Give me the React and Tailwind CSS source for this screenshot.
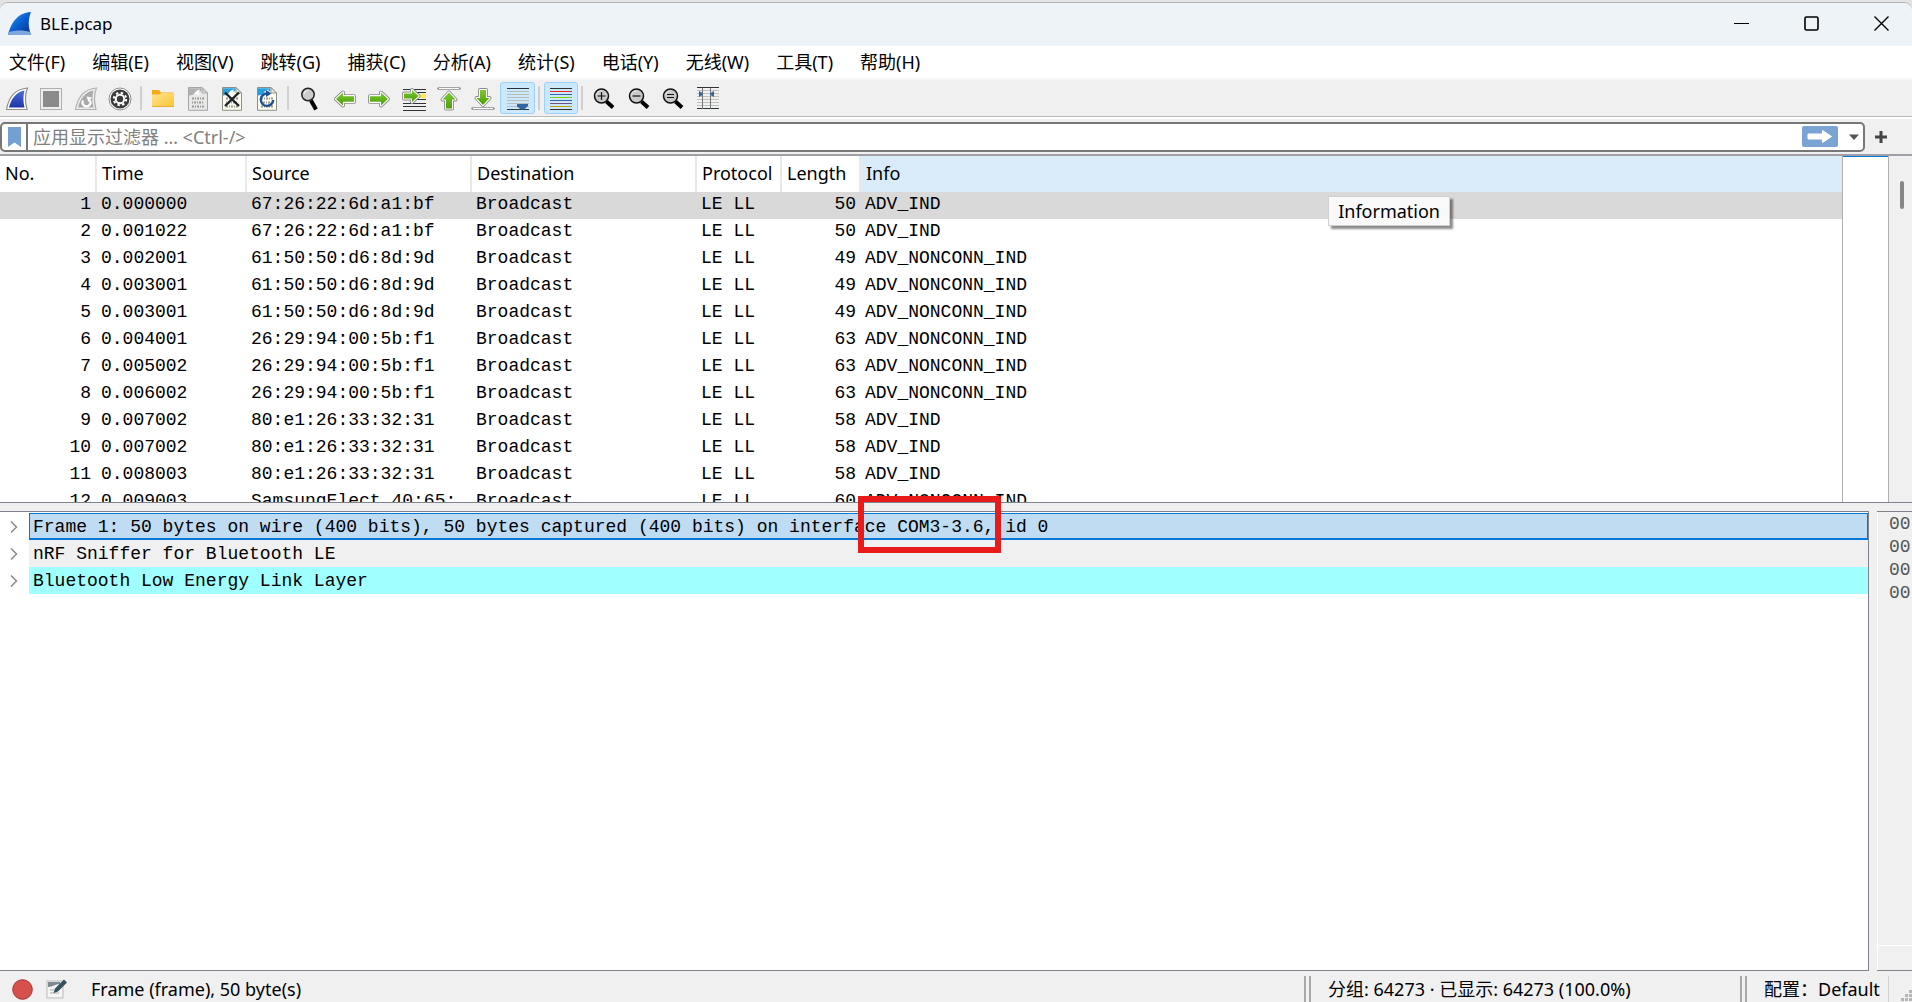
import { useState } from "react";
import clsx from "clsx";

const UI_FONT = "font-['Noto_Sans','Noto_Sans_CJK_SC',sans-serif]";
const MONO_FONT = "font-['Liberation_Mono','Noto_Sans_CJK_SC',monospace]";

const MENUS = [
  "文件(F)", "编辑(E)", "视图(V)", "跳转(G)", "捕获(C)", "分析(A)",
  "统计(S)", "电话(Y)", "无线(W)", "工具(T)", "帮助(H)",
];

const COLUMNS = [
  { label: "No.", width: "w-[97px]" },
  { label: "Time", width: "w-[150px]" },
  { label: "Source", width: "w-[225px]" },
  { label: "Destination", width: "w-[225px]" },
  { label: "Protocol", width: "w-[85px]" },
  { label: "Length", width: "w-[79px]" },
  { label: "Info", width: "" },
];

const PACKETS = [
  ["0.000000", "67:26:22:6d:a1:bf", 50, "ADV_IND"],
  ["0.001022", "67:26:22:6d:a1:bf", 50, "ADV_IND"],
  ["0.002001", "61:50:50:d6:8d:9d", 49, "ADV_NONCONN_IND"],
  ["0.003001", "61:50:50:d6:8d:9d", 49, "ADV_NONCONN_IND"],
  ["0.003001", "61:50:50:d6:8d:9d", 49, "ADV_NONCONN_IND"],
  ["0.004001", "26:29:94:00:5b:f1", 63, "ADV_NONCONN_IND"],
  ["0.005002", "26:29:94:00:5b:f1", 63, "ADV_NONCONN_IND"],
  ["0.006002", "26:29:94:00:5b:f1", 63, "ADV_NONCONN_IND"],
  ["0.007002", "80:e1:26:33:32:31", 58, "ADV_IND"],
  ["0.007002", "80:e1:26:33:32:31", 58, "ADV_IND"],
  ["0.008003", "80:e1:26:33:32:31", 58, "ADV_IND"],
  ["0.009003", "SamsungElect_40:65:", 60, "ADV_NONCONN_IND"],
];

export default function App() {
  return (
    <div className={`flex h-screen flex-col overflow-hidden bg-[#e4e4e4] pt-[2px] text-[18px] text-black ${UI_FONT}`}>
      <div className="flex min-h-0 flex-1 flex-col rounded-t-lg border-t border-[#b2b2b2] bg-[#f0f0f0]">
        <TitleBar />
        <MenuBar />
        <Toolbar />
        <FilterBar />
        <PacketPane />
        <div className="h-2 shrink-0" />
        <div className="flex min-h-0 flex-1">
          <DetailsPane />
          <BytesPane />
        </div>
        <StatusBar />
      </div>
    </div>
  );
}

function TitleBar() {
  return (
    <header className="flex h-[43px] shrink-0 items-center rounded-t-lg bg-[#eef3f8] pb-[2px] pl-2">
      <svg className="h-6 w-6" viewBox="0 0 24 24">
        <defs>
          <linearGradient id="logo" x1="0" y1="0" x2="1" y2="1">
            <stop offset="0" stopColor="#2a9df4" />
            <stop offset="0.5" stopColor="#0a5fd0" />
            <stop offset="1" stopColor="#0a2f86" />
          </linearGradient>
        </defs>
        <path d="M0 23C3 11 9 1 23 0C20 7 20 15 23 23Z" fill="url(#logo)" />
        <path d="M1 20C8 18 16 18 22 20L23 23H0Z" fill="#7fa6dd" />
      </svg>
      <h1 className="ml-2 text-[17px]">BLE.pcap</h1>
      <div className="ml-auto flex h-full gap-2">
        <WindowButton label="最小化"><path d="M0 7.5H15" /></WindowButton>
        <WindowButton label="最大化"><rect x="1" y="1" width="13" height="13" rx="1.5" strokeWidth="1.6" /></WindowButton>
        <WindowButton label="关闭"><path d="M0.5 0.5L14.5 14.5M14.5 0.5L0.5 14.5" strokeWidth="1.4" /></WindowButton>
      </div>
    </header>
  );
}

function WindowButton({ label, children }) {
  return (
    <button aria-label={label} className="flex w-[62px] items-center justify-center">
      <svg className="h-[15px] w-[15px]" viewBox="0 0 15 15" fill="none" stroke="#000">{children}</svg>
    </button>
  );
}

function MenuBar() {
  return (
    <nav className="flex h-[34px] shrink-0 gap-[27px] border-b-2 border-[#f5f5f5] bg-white pl-[9px]">
      {MENUS.map((m) => (
        <button key={m} className="whitespace-nowrap">{m}</button>
      ))}
    </nav>
  );
}

/* ---------- toolbar ---------- */

function ToolButton({ label, active, children }) {
  return (
    <button
      aria-label={label}
      className={clsx(
        "flex h-8 flex-1 items-center justify-center rounded-[3px] border pt-[2px]",
        active ? "border-[#99d1ff] bg-[#cce8ff]" : "border-transparent"
      )}
    >
      <svg className="h-6 w-6 shrink-0" viewBox="0 0 24 24">{children}</svg>
    </button>
  );
}

function Separator() {
  return (
    <div className="flex w-[9px] pl-[3px]">
      <div className="h-6 w-[2px] bg-[#d0d0d0]" />
    </div>
  );
}

function Digits() {
  return (
    <g fill="none" stroke="#9a9a94" strokeWidth="1.8">
      <path d="M6 11.5H18" strokeDasharray="2 1 1 1" />
      <path d="M6 15.5H18" strokeDasharray="1 1 2 1" />
      <path d="M6 19.5H18" strokeDasharray="2 1 1 1" />
    </g>
  );
}

function Sheet({ disabled }) {
  return (
    <>
      <path d="M2.5 0.5H16L21.5 6V23.3H2.5Z" fill={disabled ? "#e8e8e8" : "#fbfbee"} stroke={disabled ? "#a5a5a5" : "#8b8f86"} />
      <path d="M3 1.2H15.5V4C10 5 8 8.5 3 8.5Z" fill={disabled ? "#b0b0b0" : "#23a0e0"} />
      <path d="M8 7.5C9 4.5 11 2.8 14 2.6C13 4.5 13 6 13.5 7.5Z" fill="#fff" />
      <path d="M16 0.7V6H21.5Z" fill={disabled ? "#d0d0d0" : "#e8e8da"} stroke={disabled ? "#a5a5a5" : "#8b8f86"} strokeWidth="0.8" />
      <Digits />
    </>
  );
}

function GreenArrow({ d }) {
  return (
    <>
      <path d={d} fill="#5fb315" stroke="#8c8c8c" strokeWidth="4" strokeLinejoin="round" />
      <path d={d} fill="#5fb315" stroke="#fff" strokeWidth="2.2" strokeLinejoin="round" />
      <path d={d} fill="url(#green)" />
    </>
  );
}

function Magnifier({ children }) {
  return (
    <>
      <path d="M14.5 14.5L21 20.5" stroke="#000" strokeWidth="4" />
      <circle cx="9.5" cy="9" r="7" fill="#c9c9c9" stroke="#111" strokeWidth="1.5" />
      <path d="M4.5 8A5 5 0 0 1 9.5 4" fill="none" stroke="#e8e8e8" />
      <g stroke="#111" strokeWidth="1.2">{children}</g>
    </>
  );
}

function Toolbar() {
  return (
    <div className="flex h-[37px] shrink-0 items-center border-b border-[#b9b9b9]">
      <svg className="absolute h-0 w-0">
        <defs>
          <linearGradient id="green" x1="0" y1="0" x2="0" y2="1">
            <stop offset="0" stopColor="#7cc832" />
            <stop offset="1" stopColor="#4a9f08" />
          </linearGradient>
          <linearGradient id="fin" x1="0" y1="0" x2="0" y2="1">
            <stop offset="0" stopColor="#4a6fd8" />
            <stop offset="1" stopColor="#1d34a8" />
          </linearGradient>
          <linearGradient id="folder" x1="0" y1="0" x2="1" y2="1">
            <stop offset="0" stopColor="#ffe394" />
            <stop offset="1" stopColor="#fbc531" />
          </linearGradient>
        </defs>
      </svg>
      <div className="flex w-[137px]">
        <ToolButton label="开始捕获">
          <path d="M1.5 22.5C3.5 11 10 2 22.5 1C20 7 20 15 22 22.5Z" fill="#fff" stroke="#8d8d8d" strokeWidth="1.2" />
          <path d="M4 20.5C6 12 11 5 19.5 3.5C18 9 18 15 19.5 20.5Z" fill="url(#fin)" />
        </ToolButton>
        <ToolButton label="停止捕获">
          <rect x="1.5" y="1.5" width="21" height="21" fill="#eee" stroke="#b0b0b0" />
          <rect x="4" y="4" width="16" height="16" fill="#8b8b8b" />
        </ToolButton>
        <ToolButton label="重新开始捕获">
          <path d="M1.5 22.5C3.5 11 10 2 22.5 1C20 7 20 15 22 22.5Z" fill="#eee" stroke="#b0b0b0" strokeWidth="1.2" />
          <path d="M4 20.5C6 12 11 5 19.5 3.5C18 9 18 15 19.5 20.5Z" fill="#aaa" />
          <path d="M9 13.5A4 4 0 1 0 16 13.5" fill="none" stroke="#fff" strokeWidth="2.2" />
          <path d="M12.5 9.5L18 10.5L14.5 15Z" fill="#fff" />
        </ToolButton>
        <ToolButton label="捕获选项">
          <circle cx="12" cy="12" r="11" fill="#fff" stroke="#8f8f8f" />
          <circle cx="12" cy="12" r="9.5" fill="#3a3a3a" />
          <circle cx="12" cy="12" r="6.2" fill="none" stroke="#fff" strokeWidth="2" strokeDasharray="2.4 2.47" />
          <circle cx="12" cy="12" r="4.2" fill="#3a3a3a" stroke="#fff" strokeWidth="2" />
        </ToolButton>
      </div>
      <Separator />
      <div className="flex w-[138px]">
        <ToolButton label="打开">
          <path d="M1 3H8L10 5.5H22V10H1Z" fill="#f5a81c" />
          <path d="M1 7.5H8.5L10.5 6H23V20H1Z" fill="url(#folder)" />
          <path d="M1 19.5H23" stroke="#e8b030" />
        </ToolButton>
        <ToolButton label="保存"><Sheet disabled /></ToolButton>
        <ToolButton label="关闭文件">
          <Sheet />
          <path d="M5 5.5L19 19M19 5.5L5 19" stroke="#1d2226" strokeWidth="2.4" />
        </ToolButton>
        <ToolButton label="重新加载">
          <Sheet />
          <path d="M12 6.5A6.2 6.2 0 1 0 18.2 13" fill="none" stroke="#1f4f94" strokeWidth="2.4" />
          <path d="M11 3L16.5 6.5L11 10Z" fill="#1f4f94" />
        </ToolButton>
      </div>
      <Separator />
      <div className="flex w-[242px]">
        <ToolButton label="查找分组">
          <path d="M13 13.5L18 22.5" stroke="#000" strokeWidth="4" />
          <circle cx="10" cy="7.5" r="6.2" fill="#cdcdcd" stroke="#222" strokeWidth="1.5" />
          <path d="M6 7A4.5 4.5 0 0 1 9.5 3.5" fill="none" stroke="#fff" />
        </ToolButton>
        <ToolButton label="上一分组"><GreenArrow d="M3 12L10 5.5V9.2H21V14.8H10V18.5Z" /></ToolButton>
        <ToolButton label="下一分组"><GreenArrow d="M21 12L14 5.5V9.2H3V14.8H14V18.5Z" /></ToolButton>
        <ToolButton label="转到分组">
          <path d="M1 2.5H24M15 5.5H24M15 12.5H24M1 16.5H24M1 19.5H24M1 23.5H24" stroke="#2e3436" />
          <rect x="16" y="7" width="8" height="4" fill="#fce94f" />
          <GreenArrow d="M2 6.5H10V3L16.5 9L10 15V11.5H2Z" />
        </ToolButton>
        <ToolButton label="首个分组">
          <path d="M1.5 1.5H22.5" stroke="#8c8c8c" strokeWidth="2.4" strokeLinecap="round" />
          <path d="M2 1.5H22" stroke="#fff" />
          <GreenArrow d="M12 5.5L18.5 12.5H15V21.5H9V12.5H5.5Z" />
        </ToolButton>
        <ToolButton label="最新分组">
          <path d="M1.5 21.5H22.5" stroke="#8c8c8c" strokeWidth="2.4" strokeLinecap="round" />
          <path d="M2 21.5H22" stroke="#fff" />
          <GreenArrow d="M12 18L18.5 11H15V3H9V11H5.5Z" />
        </ToolButton>
        <ToolButton label="自动滚动" active>
          <path d="M1 1.5H23M1 22.5H23" stroke="#2e3436" />
          <path d="M1 4.5H23M1 7.5H23M1 10.5H23M1 13.5H23M1 16.5H23M1 19.5H23" stroke="#b9bbb5" />
          <path d="M11 17H22V19L18 22.5H15L11 19.5Z" fill="#3465a4" />
        </ToolButton>
      </div>
      <Separator />
      <div className="flex w-[34px]">
        <ToolButton label="着色" active>
          <path d="M1 1.5H23M1 22.5H23" stroke="#2e3436" />
          <path d="M1 4.5H23" stroke="#ef2929" />
          <path d="M1 7.5H23" stroke="#3465a4" />
          <path d="M1 10.5H23" stroke="#73d216" />
          <path d="M1 13.5H23" stroke="#3465a4" />
          <path d="M1 16.5H23" stroke="#75507b" />
          <path d="M1 19.5H23" stroke="#c4a000" />
        </ToolButton>
      </div>
      <Separator />
      <div className="flex w-[138px]">
        <ToolButton label="放大"><Magnifier><path d="M5.5 9H13.5M9.5 5V13" /></Magnifier></ToolButton>
        <ToolButton label="缩小"><Magnifier><path d="M5.5 9H13.5" /></Magnifier></ToolButton>
        <ToolButton label="原始大小"><Magnifier><path d="M6 7.5H13M6 10.5H13" /></Magnifier></ToolButton>
        <ToolButton label="调整列宽">
          <path d="M1 0.5H23M1 21.5H23" stroke="#2e3436" />
          <path d="M1 3.5H23M1 6.5H23M1 9.5H23M1 12.5H23M1 15.5H23M1 18.5H23" stroke="#c0c2bc" />
          <path d="M6.5 1V22M14.5 1V22" stroke="#777" />
          <path d="M3 4L6.5 6V8L3 10ZM18 4L14.5 6V8L18 10Z" fill="#3465a4" />
        </ToolButton>
      </div>
    </div>
  );
}

function FilterBar() {
  const [filter, setFilter] = useState("");
  return (
    <div className="flex h-[39px] shrink-0 items-center border-t-2 border-b-2 border-t-white border-b-[#a09fa8]">
      <div className="flex h-[30px] flex-1 items-center rounded-[5px] border-2 border-[#777] bg-white">
        <button aria-label="书签" className="flex h-full w-[26px] items-center justify-center border-r-2 border-[#777]">
          <svg className="h-5 w-[13px]" viewBox="0 0 13 20">
            <path d="M0 0H13V20L6.5 15.5L0 20Z" fill="#739fd2" />
          </svg>
        </button>
        <input
          aria-label="显示过滤器"
          className="h-full min-w-0 flex-1 px-[5px] outline-none placeholder:text-[#808080]"
          placeholder="应用显示过滤器 … <Ctrl-/>"
          value={filter}
          onChange={(e) => setFilter(e.target.value)}
        />
        <button aria-label="应用">
          <svg className="h-[21px] w-9" viewBox="0 0 36 21">
            <rect width="36" height="21" rx="2" fill="#7ba4d5" />
            <path d="M6 8H20.5V4.5L29.5 10.5L20.5 16.5V13H6Z" fill="#fff" stroke="#fff" strokeLinejoin="round" />
          </svg>
        </button>
        <button aria-label="过滤器历史" className="flex w-[25px] justify-end pr-1">
          <svg className="h-[6px] w-[10px]" viewBox="0 0 10 6"><path d="M0 0.5H10L5 6Z" fill="#555" /></svg>
        </button>
      </div>
      <button aria-label="添加过滤器按钮" className="flex w-[47px] pl-[10px]">
        <svg className="h-3 w-3" viewBox="0 0 12 12"><path d="M6 0V12M0 6H12" stroke="#444" strokeWidth="3" /></svg>
      </button>
    </div>
  );
}

/* ---------- packet list ---------- */

function PacketPane() {
  return (
    <section className="relative flex h-[347px] shrink-0 border-b border-[#7f848c] bg-white">
      <div className="min-w-0 flex-1 overflow-hidden">
        <table className="w-full table-fixed border-separate border-spacing-0">
          <thead>
            <tr className="h-9">
              {COLUMNS.map((c) => (
                <th
                  key={c.label}
                  className={clsx(
                    "p-0 pb-[2px] pl-[5px] text-left font-normal",
                    c.width,
                    c.label === "Info" ? "bg-[#d9ebf9]" : "border-r-2 border-[#e8e8e8]"
                  )}
                >
                  {c.label}
                </th>
              ))}
            </tr>
          </thead>
          <tbody className={`leading-[25px] whitespace-nowrap ${MONO_FONT}`}>
            {PACKETS.map(([time, source, length, info], i) => (
              <tr key={i} className={clsx("h-[27px] align-top", i === 0 && "bg-[#d9d9d9]")}>
                <td className="pr-[6px] text-right">{i + 1}</td>
                <td className="pl-1">{time}</td>
                <td className="pl-1">{source}</td>
                <td className="pl-1">Broadcast</td>
                <td className="pl-1">LE LL</td>
                <td className="pr-[5px] text-right">{length}</td>
                <td className="pl-1">{info}</td>
              </tr>
            ))}
          </tbody>
        </table>
      </div>
      {/* minimap */}
      <div className="w-[47px] border-x border-[#b0b0b0]">
        <div className="h-px bg-[#0078d7]" />
      </div>
      {/* scrollbar */}
      <div className="w-[23px] bg-[#f0f0f0] pt-[25px] pl-[11px]">
        <div className="h-7 w-1 rounded-full bg-[#868686]" />
      </div>
      <div
        role="tooltip"
        className="absolute top-10 right-[462px] border border-[#d0d0d0] bg-[#f9f9f9] px-[9px] leading-7 shadow-[3px_3px_2px_rgba(0,0,0,0.45)]"
      >
        Information
      </div>
    </section>
  );
}

/* ---------- packet details ---------- */

function DetailRow({ className, children }) {
  return (
    <li className="flex h-[27px]">
      <button aria-label="展开" className="flex w-[29px] items-center pl-[10px]">
        <svg className="h-3 w-2" viewBox="0 0 8 12" fill="none" stroke="#8a8a8a" strokeWidth="1.5">
          <path d="M1 0.5L6.5 6L1 11.5" />
        </svg>
      </button>
      <div className={clsx("flex flex-1 items-center pt-[2px] whitespace-pre", className)}>{children}</div>
    </li>
  );
}

function DetailsPane() {
  return (
    <section className="relative mr-2 min-w-0 flex-1 border-t border-r border-b border-[#7f848c] bg-white pt-px">
      <ul className={MONO_FONT}>
        <DetailRow className="border border-b-2 border-[#0078d7] bg-[#c0dcf3] pl-[3px]">
          Frame 1: 50 bytes on wire (400 bits), 50 bytes captured (400 bits) on interface COM3-3.6, id 0
        </DetailRow>
        <DetailRow className="bg-[#f0f0f0] pl-1">nRF Sniffer for Bluetooth LE</DetailRow>
        <DetailRow className="bg-[#a0ffff] pl-1">Bluetooth Low Energy Link Layer</DetailRow>
      </ul>
      {/* highlight around the interface name */}
      <div className="absolute -top-4 left-[858px] h-[57px] w-[143px] border-[6px] border-[#e81a1a]" />
    </section>
  );
}

function BytesPane() {
  return (
    <section className="flex w-[35px] shrink-0 flex-col border-y border-t-[#7f848c] border-b-[#7f848c]">
      <div className={`flex-1 border-b border-l border-white pt-px pl-[11px] leading-[23px] text-[#555] ${MONO_FONT}`}>
        {[0, 1, 2, 3].map((row) => (
          <div key={row}>00</div>
        ))}
      </div>
      <div className="h-6 border-l border-white" />
    </section>
  );
}

/* ---------- status bar ---------- */

function Grip() {
  return <div className="h-full w-[7px] border-x-2 border-[#a8a8a8]" />;
}

function StatusBar() {
  return (
    <footer className="flex h-[31px] shrink-0 items-center pt-[5px] whitespace-nowrap">
      <button aria-label="专家信息" className="pl-3">
        <svg className="h-[21px] w-[21px]" viewBox="0 0 21 21">
          <circle cx="10.5" cy="10.5" r="9.8" fill="#d6504d" stroke="#a33" />
        </svg>
      </button>
      <button aria-label="捕获文件注释" className="pl-[13px]">
        <svg className="h-[22px] w-[22px]" viewBox="0 0 22 22">
          <rect x="1" y="3" width="16" height="17" fill="#f4f4f4" stroke="#bbb" />
          <path d="M2 4H14V6C9 6 7 9 2 9Z" fill="#7d8a90" />
          <path d="M4 12H8M4 15H13" stroke="#aaa" />
          <path d="M7.5 15L9 10.5L18 1.5L21 4.5L12 13.5Z" fill="#35525f" />
        </svg>
      </button>
      <div className="min-w-0 flex-1 pl-[23px]">Frame (frame), 50 byte(s)</div>
      <Grip />
      <div className="w-[429px] pl-[17px]">分组: 64273 · 已显示: 64273 (100.0%)</div>
      <Grip />
      <div className="flex h-full w-[142px] items-center border-r border-[#d0d0d0] pl-[17px]">配置：Default</div>
      <svg className="h-3 w-[23px] self-end" viewBox="0 0 23 12" fill="#b5b5b5">
        <path d="M20 0H23V3H20ZM16 4H19V7H16ZM20 4H23V7H20ZM12 8H15V11H12ZM16 8H19V11H16ZM20 8H23V11H20Z" />
      </svg>
    </footer>
  );
}
